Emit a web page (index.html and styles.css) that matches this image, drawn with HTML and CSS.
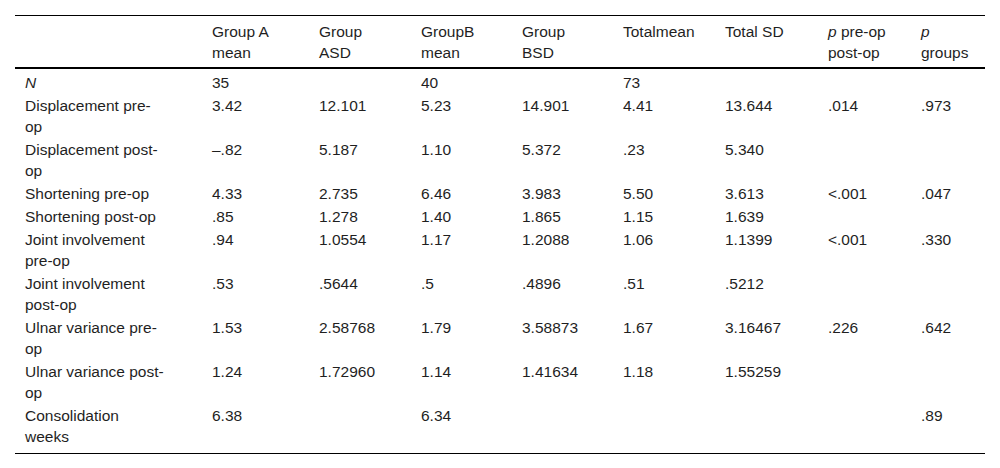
FILE: index.html
```html
<!DOCTYPE html>
<html lang="en">
<head>
<meta charset="utf-8">
<title>Table</title>
<link rel="stylesheet" href="styles.css">
</head>
<body>
<table class="data">
  <colgroup>
    <col class="c-label">
    <col class="c-a">
    <col class="c-b">
    <col class="c-c">
    <col class="c-d">
    <col class="c-e">
    <col class="c-f">
    <col class="c-g">
    <col class="c-h">
  </colgroup>
  <thead>
    <tr>
      <th class="label"></th>
      <th>Group A mean</th>
      <th>Group ASD</th>
      <th>GroupB mean</th>
      <th>Group BSD</th>
      <th>Totalmean</th>
      <th>Total SD</th>
      <th><i>p</i> pre-op post-op</th>
      <th><i>p</i> groups</th>
    </tr>
  </thead>
  <tbody>
    <tr class="first">
      <td class="label"><i>N</i></td>
      <td>35</td><td></td><td>40</td><td></td><td>73</td><td></td><td></td><td></td>
    </tr>
    <tr>
      <td class="label">Displacement pre-op</td>
      <td>3.42</td><td>12.101</td><td>5.23</td><td>14.901</td><td>4.41</td><td>13.644</td><td>.014</td><td>.973</td>
    </tr>
    <tr>
      <td class="label">Displacement post-op</td>
      <td>–.82</td><td>5.187</td><td>1.10</td><td>5.372</td><td>.23</td><td>5.340</td><td></td><td></td>
    </tr>
    <tr>
      <td class="label">Shortening pre-op</td>
      <td>4.33</td><td>2.735</td><td>6.46</td><td>3.983</td><td>5.50</td><td>3.613</td><td>&lt;.001</td><td>.047</td>
    </tr>
    <tr>
      <td class="label">Shortening post-op</td>
      <td>.85</td><td>1.278</td><td>1.40</td><td>1.865</td><td>1.15</td><td>1.639</td><td></td><td></td>
    </tr>
    <tr>
      <td class="label">Joint involvement pre-op</td>
      <td>.94</td><td>1.0554</td><td>1.17</td><td>1.2088</td><td>1.06</td><td>1.1399</td><td>&lt;.001</td><td>.330</td>
    </tr>
    <tr>
      <td class="label">Joint involvement post-op</td>
      <td>.53</td><td>.5644</td><td>.5</td><td>.4896</td><td>.51</td><td>.5212</td><td></td><td></td>
    </tr>
    <tr>
      <td class="label">Ulnar variance pre-op</td>
      <td>1.53</td><td>2.58768</td><td>1.79</td><td>3.58873</td><td>1.67</td><td>3.16467</td><td>.226</td><td>.642</td>
    </tr>
    <tr>
      <td class="label">Ulnar variance post-op</td>
      <td>1.24</td><td>1.72960</td><td>1.14</td><td>1.41634</td><td>1.18</td><td>1.55259</td><td></td><td></td>
    </tr>
    <tr class="last">
      <td class="label">Consolidation weeks</td>
      <td>6.38</td><td></td><td>6.34</td><td></td><td></td><td></td><td></td><td>.89</td>
    </tr>
  </tbody>
</table>
</body>
</html>
```

FILE: styles.css
```css
html, body {
  margin: 0;
  padding: 0;
  background: #ffffff;
}

body {
  font-family: "Liberation Sans", Arial, Helvetica, sans-serif;
  font-size: 15.5px;
  line-height: 21px;
  color: #1f1f1f;
}

.data {
  margin: 15px 0 0 15px;
  width: 970px;
  table-layout: fixed;
  border-collapse: collapse;
  border-top: 1px solid #000;
  border-bottom: 1px solid #000;
}

.c-label { width: 187px; }
.c-a { width: 107px; }
.c-b { width: 102px; }
.c-c { width: 101px; }
.c-d { width: 101px; }
.c-e { width: 102px; }
.c-f { width: 103px; }
.c-g { width: 93px; }
.c-h { width: 74px; }

.data th {
  font-weight: normal;
  text-align: left;
  vertical-align: top;
  padding: 5px 16px 4px 10px;
}

.data thead tr {
  border-bottom: 2px solid #000;
}

.data td {
  text-align: left;
  vertical-align: top;
  padding: 1px 16px 1px 10px;
}

.data .label {
  padding-right: 36px;
}

.data tr.first td {
  padding-top: 3px;
}

.data tr.last td {
  padding-bottom: 6px;
}
```
